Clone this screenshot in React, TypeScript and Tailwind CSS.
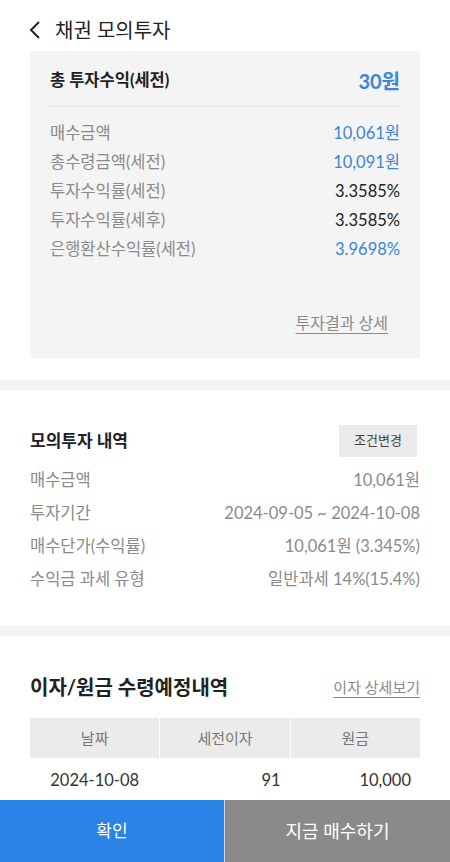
import React from 'react';

const font = { fontFamily: 'Lato, "Noto Sans CJK KR", sans-serif' };

const summaryRows = [
  { label: '매수금액', value: '10,061원', blue: true },
  { label: '총수령금액(세전)', value: '10,091원', blue: true },
  { label: '투자수익률(세전)', value: '3.3585%', blue: false },
  { label: '투자수익률(세후)', value: '3.3585%', blue: false },
  { label: '은행환산수익률(세전)', value: '3.9698%', blue: true },
];

const historyRows = [
  { label: '매수금액', value: '10,061원' },
  { label: '투자기간', value: '2024-09-05 ~ 2024-10-08' },
  { label: '매수단가(수익률)', value: '10,061원 (3.345%)' },
  { label: '수익금 과세 유형', value: '일반과세 14%(15.4%)' },
];

const App = () => {
  return (
    <div style={font} className="w-[450px] min-h-[862px] bg-white text-[#222] pb-[70px]">
      {/* header */}
      <div className="flex items-center h-[51px] pl-[27px] pt-[9px]">
        <svg width="16" height="20" viewBox="0 0 16 20" className="mr-[12px]">
          <path d="M12 2 L4 10 L12 18" fill="none" stroke="#222" strokeWidth="2" />
        </svg>
        <h1 className="text-[20px] leading-none">채권 모의투자</h1>
      </div>

      {/* summary card */}
      <div className="mx-[30px] h-[307px] bg-[#f4f4f4] px-[20px] flex flex-col">
        <div className="flex items-center justify-between h-[56px] pt-[4px] border-b border-[#e6e6e6]">
          <span className="text-[16.5px] font-bold">총 투자수익(세전)</span>
          <span className="text-[20px] font-bold text-[#3b86d6]">30원</span>
        </div>
        <div className="flex flex-col pt-[12px]">
          {summaryRows.map((r) => (
            <div key={r.label} className="flex justify-between items-center h-[29px] text-[16.5px]">
              <span className="text-[#8a8a8a]">{r.label}</span>
              <span className={r.blue ? 'text-[#3b86d6]' : 'text-[#222]'}>{r.value}</span>
            </div>
          ))}
        </div>
        <div className="flex justify-end mt-[47px] pr-[12px]">
          <span className="text-[16px] text-[#8a8a8a] underline underline-offset-[4px]">투자결과 상세</span>
        </div>
      </div>

      <div className="h-[10px] bg-[#f2f2f2] mt-[22px]" />

      {/* history */}
      <div className="px-[30px] pt-[35px] pb-[30px]">
        <div className="flex items-center justify-between">
          <span className="text-[17px] font-bold">모의투자 내역</span>
          <button className="w-[78px] h-[32px] bg-[#ebebeb] text-[13px] text-[#444] mr-[3px]">조건변경</button>
        </div>
        <div className="flex flex-col mt-[7px]">
          {historyRows.map((r) => (
            <div key={r.label} className="flex justify-between items-center h-[33px] text-[16.5px] text-[#8a8a8a]">
              <span>{r.label}</span>
              <span>{r.value}</span>
            </div>
          ))}
        </div>
      </div>

      <div className="h-[10px] bg-[#f2f2f2]" />

      {/* schedule */}
      <div className="px-[30px] pt-[36px]">
        <div className="flex items-center justify-between">
          <span className="text-[20px] font-bold">이자/원금 수령예정내역</span>
          <span className="text-[15px] text-[#8a8a8a] underline underline-offset-[4px]">이자 상세보기</span>
        </div>
        <div className="grid grid-cols-3 gap-x-[1px] mt-[16px] text-[15px]">
          <div className="h-[40px] bg-[#ebebeb] flex items-center justify-center text-[#777]">날짜</div>
          <div className="h-[40px] bg-[#ebebeb] flex items-center justify-center text-[#777]">세전이자</div>
          <div className="h-[40px] bg-[#ebebeb] flex items-center justify-center text-[#777]">원금</div>
          <div className="h-[44px] flex items-center justify-center text-[16.5px] text-[#333]">2024-10-08</div>
          <div className="h-[44px] flex items-center justify-end pr-[9px] text-[16.5px] text-[#333]">91</div>
          <div className="h-[44px] flex items-center justify-end pr-[9px] text-[16.5px] text-[#333]">10,000</div>
        </div>
      </div>

      {/* bottom buttons */}
      <div className="fixed bottom-0 left-0 w-[450px] h-[62px] flex">
        <button className="w-[224px] h-full bg-[#2a84e8] text-white text-[17px]">확인</button>
        <div className="w-[1px] bg-[#cfd8e3]" />
        <button className="flex-1 h-full bg-[#8a8a8a] text-white text-[18px]">지금 매수하기</button>
      </div>
    </div>
  );
};

export default App;
